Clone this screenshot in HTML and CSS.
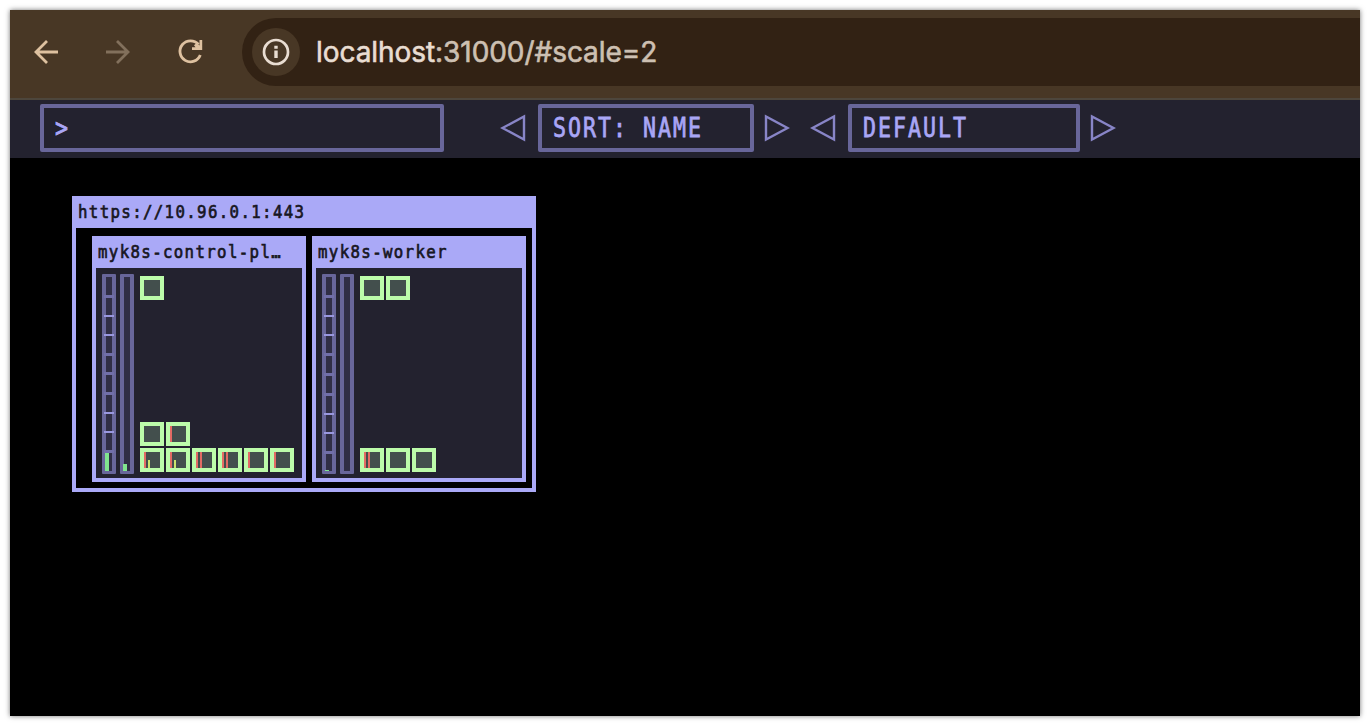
FILE: index.html
```
<!DOCTYPE html>
<html lang="en">
<head>
<meta charset="utf-8">
<title>Kubernetes Operational View</title>
<link rel="stylesheet" href="styles.css">
</head>
<body>
<div class="window">
  <header class="chrome">
    <svg class="nav" width="180" height="28" viewBox="0 0 180 28" fill="none" stroke-width="2.8">
      <path stroke="#dec1a0" d="M26 14H4M15 3 4 14l11 11"/>
      <path stroke="#82705c" d="M74 14h22M85 3 96 14 85 25"/>
      <path stroke="#dec1a0" d="M166.500 6.500A10.500 10.500 0 1 0 168.300 17"/>
      <path fill="#dec1a0" d="M167.500 2h2.700v10H160V9.300h3.500l-1.500-2 2.500-2.300 3 2.500z"/>
    </svg>
    <div class="address">
      <span class="site">
        <svg width="28" height="28" viewBox="0 0 28 28" fill="none" stroke="#e9ddd2" stroke-width="2.7"><circle cx="14" cy="14" r="12"/><path stroke-width="3.4" d="M14 12.500v7.500M14 7.700v3"/></svg>
      </span>
      <span class="url"><span class="host">localhost</span>:31000/#scale=2</span>
    </div>
  </header>
  <nav class="bar">
    <div class="field search"><span class="label">&gt;</span></div>
    <svg class="arrow a1" width="26" height="28" viewBox="0 0 26 28"><path d="M24 2.500v23L2.500 14z"/></svg>
    <div class="field sort"><span class="label">SORT: NAME</span></div>
    <svg class="arrow a2" width="26" height="28" viewBox="0 0 26 28"><path d="M2 2.500v23L23.500 14z"/></svg>
    <svg class="arrow a3" width="26" height="28" viewBox="0 0 26 28"><path d="M24 2.500v23L2.500 14z"/></svg>
    <div class="field theme"><span class="label">DEFAULT</span></div>
    <svg class="arrow a4" width="26" height="28" viewBox="0 0 26 28"><path d="M2 2.500v23L23.500 14z"/></svg>
  </nav>
  <main class="canvas">
    <section class="cluster">
      <h1 class="title"><span class="name">https://10.96.0.1:443</span></h1>
      <div class="nodes">
        <article class="node">
          <h2 class="title"><span class="name">myk8s-control-pl…</span></h2>
          <div class="content">
            <div class="meter cpu"><i class="soft"></i><i></i><i></i><i class="soft"></i><i class="soft"></i><i class="soft"></i><i></i><i></i><i class="soft"></i><i class="load"><b class="use full"></b></i></div>
            <div class="meter"><b class="use low"></b></div>
            <div class="pods">
              <div class="row"><span class="pod"></span></div>
              <div class="system">
                <div class="row"><span class="pod"></span><span class="pod"><b class="red"></b></span></div>
                <div class="row"><span class="pod"><b class="red"></b><b class="yellow"></b></span><span class="pod"><b class="red"></b><b class="yellow"></b></span><span class="pod"><b class="red"></b><b class="red"></b></span><span class="pod"><b class="red"></b><b class="red"></b></span><span class="pod"><b class="red"></b></span><span class="pod"><b class="red"></b></span></div>
              </div>
            </div>
          </div>
        </article>
        <article class="node">
          <h2 class="title"><span class="name">myk8s-worker</span></h2>
          <div class="content">
            <div class="meter cpu"><i class="soft"></i><i></i><i></i><i class="soft"></i><i class="soft"></i><i class="soft"></i><i></i><i></i><i class="soft"></i><i class="load"><b class="use trace"></b></i></div>
            <div class="meter"></div>
            <div class="pods">
              <div class="row"><span class="pod"></span><span class="pod"></span></div>
              <div class="system">
                <div class="row"><span class="pod"><b class="red"></b><b class="red"></b></span><span class="pod"></span><span class="pod"></span></div>
              </div>
            </div>
          </div>
        </article>
      </div>
    </section>
  </main>
</div>
</body>
</html>
```
FILE: styles.css
```
* { box-sizing: border-box; }
body { margin: 0; padding: 10px; background: #fff; height: 726px; overflow: hidden; }
.window { width: 1350px; height: 706px; background: #000; box-shadow: 0 0 5px rgba(0,0,0,.55); display: flex; flex-direction: column; }
.chrome { height: 90px; flex: none; background: #483725; border-bottom: 2px solid #4d463c; padding: 8px 0 0 22px; display: flex; }
.nav { margin-top: 20px; flex: none; }
.address { margin-left: 30px; flex: 1; height: 68px; background: #322214; border-radius: 34px 0 0 34px; padding-left: 10px; display: flex; align-items: center; }
.site { width: 48px; height: 48px; border-radius: 50%; background: #483725; display: flex; align-items: center; justify-content: center; }
.url { margin-left: 16px; font: 28px/34px Inter, sans-serif; color: #cdc0b2; letter-spacing: -.06px; -webkit-text-stroke: .6px; white-space: nowrap; }
.host { color: #e9ddd2; }
.bar { height: 58px; flex: none; background: #23222f; padding: 4px 0 0 30px; display: flex; }
.field { height: 48px; border: 4px solid #68669a; border-radius: 2px; padding-left: 11px; color: #a9a6f6; display: flex; align-items: center; }
.search { width: 404px; }
.sort { width: 216px; }
.theme { width: 232px; }
.label { font: 27px/38px "DejaVu Sans Mono", monospace; letter-spacing: 2.5px; -webkit-text-stroke: .8px; transform: scaleX(.8); transform-origin: 0 50%; white-space: pre; }
.arrow { margin-top: 10px; fill: none; stroke: #8885c7; stroke-width: 2.4; flex: none; }
.a1 { margin-left: 56px; margin-right: 12px; }
.a2 { margin-left: 10px; }
.a3 { margin-left: 20px; margin-right: 12px; }
.a4 { margin-left: 10px; }
.canvas { flex: 1; padding: 38px 0 0 62px; }
.cluster { width: 464px; height: 296px; border: 4px solid #aaa9f7; }
.title { margin: -4px 0 0; height: 32px; background: #aaa9f7; color: #171622; display: flex; align-items: flex-start; padding-left: 2px; }
.name { font: 18.5px/31px "DejaVu Sans Mono", monospace; letter-spacing: 1.6px; -webkit-text-stroke: .7px; transform: scaleX(.85); transform-origin: 0 50%; white-space: pre; }
.nodes { display: flex; gap: 6px; padding: 8px 0 0 16px; }
.node { width: 214px; height: 246px; flex: none; border: 4px solid #aaa9f7; background: #23222f; }
.content { display: flex; padding: 6px 0 0 6px; }
.meter { width: 14px; height: 200px; margin-right: 4px; flex: none; border: solid #68669a; border-width: 3px 4px; border-radius: 1px; background: #302e45; display: flex; flex-direction: column; justify-content: flex-end; }
.cpu { padding-top: 1px; }
.cpu i { flex: 1; margin: 0 -2px; border-bottom: 2px solid #9997df; }
.cpu .soft { border-bottom: 3px solid #706ea8; }
.cpu .load { border: 0; display: flex; align-items: flex-end; padding-left: 1px; }
.use { display: block; background: #80e58e; width: 4px; }
.full { height: 18px; }
.low { height: 7px; margin-left: -1px; }
.trace { height: 1px; }
.pods { margin: 2px 0 0 2px; height: 196px; display: flex; flex-direction: column; justify-content: space-between; }
.system { display: flex; flex-direction: column; gap: 2px; }
.row { display: flex; gap: 2px; }
.pod { width: 24px; height: 24px; flex: none; border: 4px solid #bcfcaa; background: #434f4d; display: flex; align-items: flex-end; gap: 2px; }
.red { width: 2px; height: 16px; background: #e36b64; }
.yellow { width: 2px; height: 8px; background: #cbe66d; }
```
